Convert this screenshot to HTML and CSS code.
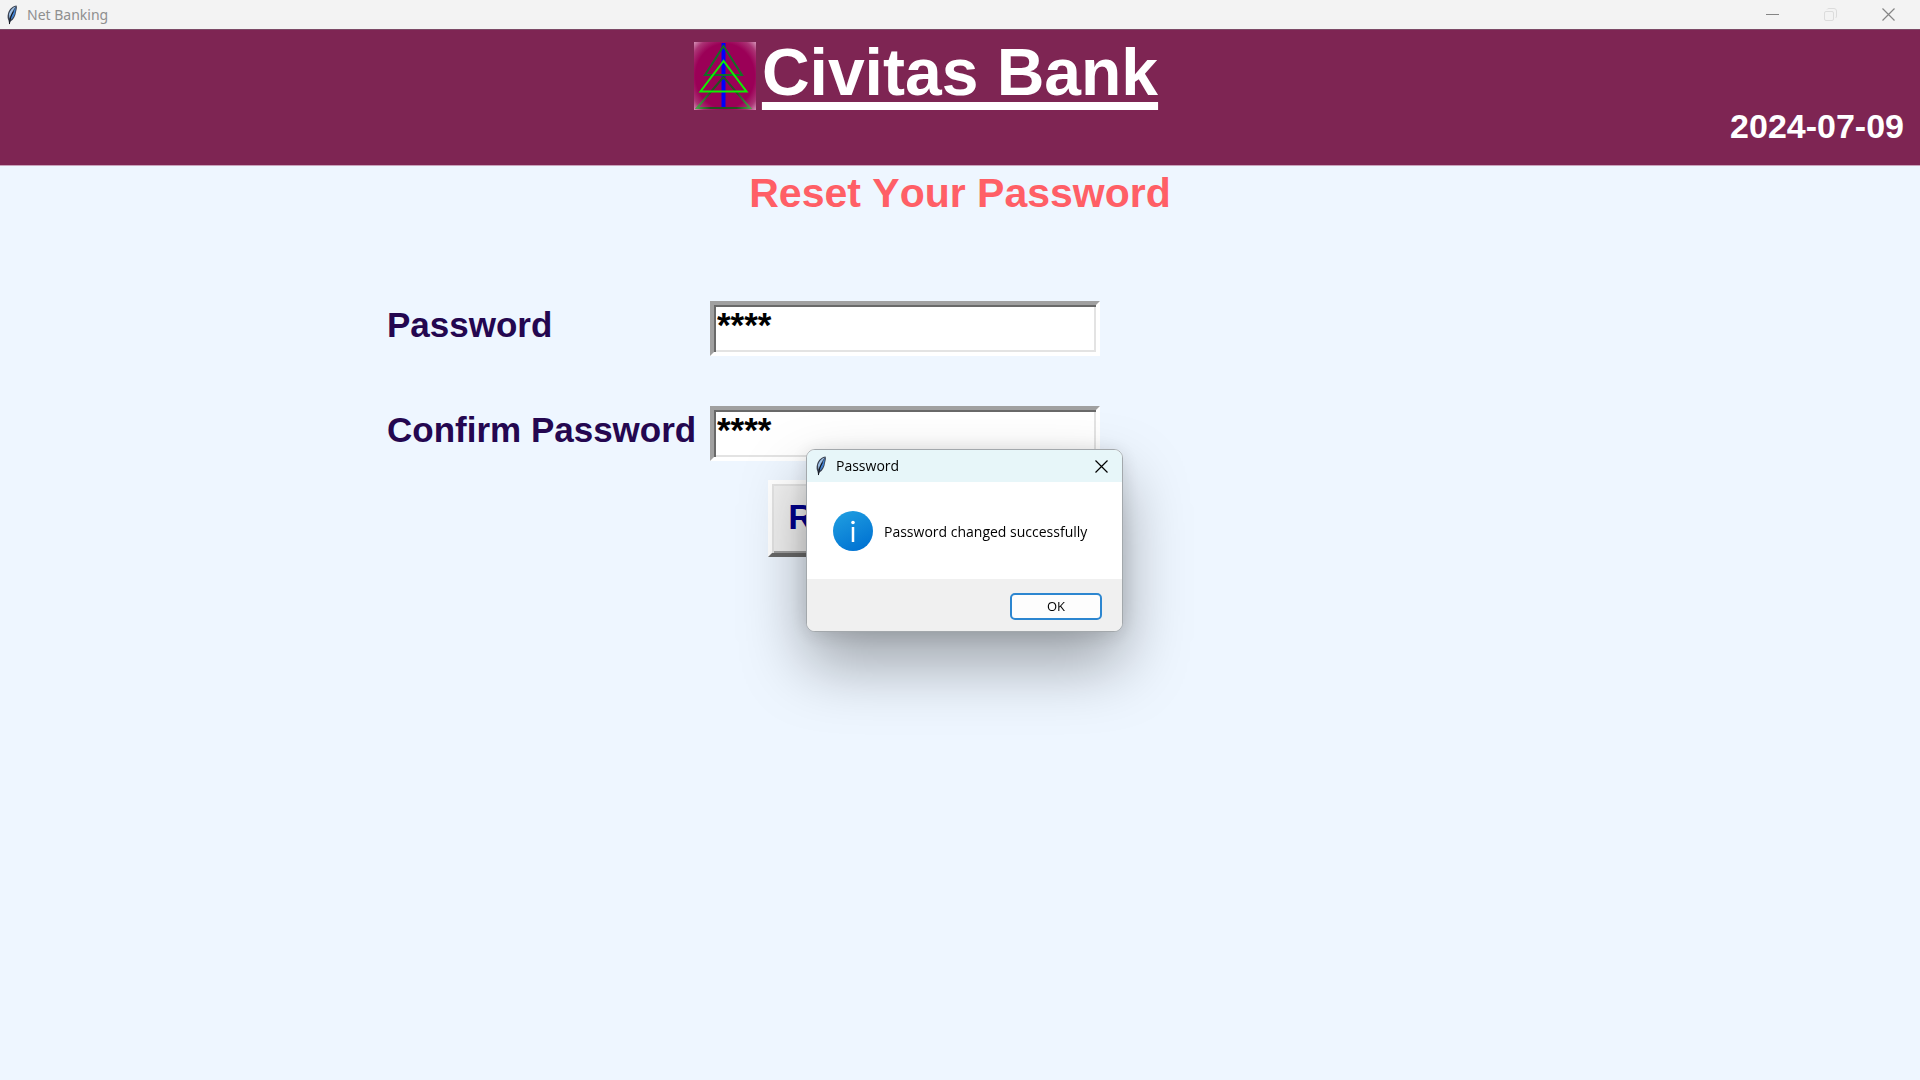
FILE: index.html
```html
<!DOCTYPE html>
<html lang="en">
<head>
<meta charset="utf-8">
<title>Net Banking</title>
<link rel="stylesheet" href="styles.css">
</head>
<body>
<svg class="defs" aria-hidden="true">
  <symbol id="feather" viewBox="0 0 12 20">
    <path d="M10.5.5C7 1 3 4 2 8.500C1.300 11.500 1.500 13.500 2.500 15.500L3.300 19.500L4.500 16.500C8 14.500 9.500 10.500 10 7C10.500 4.500 11.500 2.500 10.500.5Z" fill="#3a4252"/>
    <path d="M9.800 1.500C6.500 2.500 4 5.500 3 9L3.400 13.500C5 9 7 5 9.800 1.500Z" fill="#9dbfe4"/>
    <path d="M10 2C7.500 6 5.500 10 4.300 15C7.500 13 8.800 10 9.300 6.500Z" fill="#3f80d0"/>
    <path d="M7.500 6.500C5.500 10 4 13 3.400 19" fill="none" stroke="#11151c"/>
  </symbol>
  <symbol id="close" viewBox="0 0 13 13">
    <path d="M.5.5L12.500 12.500M12.500.5L.5 12.500" fill="none" stroke="currentColor" stroke-width="1.200"/>
  </symbol>
</svg>

<header class="titlebar">
  <svg class="feather"><use href="#feather"/></svg>
  <span class="titlebar-text">Net Banking</span>
  <div class="window-controls">
    <button type="button" aria-label="Minimize"><svg viewBox="0 0 13 13"><path d="M0 6.500H13" stroke="currentColor"/></svg></button>
    <button type="button" aria-label="Restore" disabled><svg viewBox="0 0 13 13"><rect x=".5" y="3.500" width="9" height="9" rx="1.500" fill="none" stroke="currentColor"/><path d="M3 1.500Q3.500.5 5 .5H10Q12.500.5 12.500 3V8Q12.500 9.500 11.500 10" fill="none" stroke="currentColor"/></svg></button>
    <button type="button" aria-label="Close"><svg><use href="#close"/></svg></button>
  </div>
</header>

<section class="banner">
  <div class="brand">
    <svg class="logo" viewBox="0 0 62 68" role="img" aria-label="Civitas Bank logo">
      <defs>
        <radialGradient id="glow" cx=".5" cy=".5" r=".72">
          <stop offset=".66" stop-color="#9b0057"/>
          <stop offset=".84" stop-color="#ab3475"/>
          <stop offset="1" stop-color="#dba0c0"/>
        </radialGradient>
        <linearGradient id="base" x1="0" x2="1">
          <stop offset="0" stop-color="#48a048"/>
          <stop offset=".25" stop-color="#245020"/>
          <stop offset=".75" stop-color="#245020"/>
          <stop offset="1" stop-color="#48a048"/>
        </linearGradient>
      </defs>
      <rect width="62" height="68" fill="url(#glow)"/>
      <path d="M29.500 1V66" stroke="#0000fa" stroke-width="4"/>
      <path d="M29.500 4L11 33H48Z" fill="none" stroke="#127025" stroke-width="2"/>
      <path d="M29.500 35L3 66H56Z" fill="none" stroke="url(#base)" stroke-width="2"/>
      <path d="M29.500 19L6.500 49.500H52.500Z" fill="none" stroke="#0ff000" stroke-width="2"/>
    </svg>
    <h1 class="bank-name">Civitas Bank</h1>
  </div>
  <time class="date" datetime="2024-07-09">2024-07-09</time>
</section>

<main>
  <h2 class="page-title">Reset Your Password</h2>
  <form class="reset-form">
    <label for="password">Password</label>
    <input id="password" type="text" value="****" autocomplete="off">
    <label for="confirm">Confirm Password</label>
    <input id="confirm" type="text" value="****" autocomplete="off">
    <button class="reset" type="submit">Reset</button>
  </form>
</main>

<div class="dialog" role="dialog" aria-labelledby="dialog-title">
  <div class="dialog-head">
    <svg class="feather"><use href="#feather"/></svg>
    <span id="dialog-title">Password</span>
    <button class="dialog-close" type="button" aria-label="Close"><svg><use href="#close"/></svg></button>
  </div>
  <div class="dialog-body">
    <svg class="info" viewBox="0 0 40 40" aria-hidden="true">
      <defs>
        <linearGradient id="info-fill" x1=".2" y1="0" x2=".7" y2="1">
          <stop offset="0" stop-color="#1f9de0"/>
          <stop offset="1" stop-color="#0072d2"/>
        </linearGradient>
      </defs>
      <circle cx="20" cy="20" r="20" fill="url(#info-fill)"/>
      <circle cx="20" cy="11.500" r="1.800" fill="#fff"/>
      <path d="M20 16V31" stroke="#fff" stroke-width="2.500"/>
    </svg>
    <p>Password changed successfully</p>
  </div>
  <div class="dialog-foot">
    <button class="ok" type="button">OK</button>
  </div>
</div>
</body>
</html>
```
FILE: styles.css
```css
* {
  box-sizing: border-box;
}

body {
  margin: 0;
  min-height: 100vh;
  background: #eef6ff;
  font-family: "Liberation Sans", Arial, sans-serif;
  font-weight: bold;
  font-kerning: none;
}

button {
  font-family: inherit;
}

.defs {
  position: absolute;
  width: 0;
  height: 0;
}

.titlebar {
  display: flex;
  align-items: center;
  height: 29px;
  padding: 0 3px 0 6px;
  background: #f3f3f3;
  color: #8f8f8f;
  font: 14px/20px "Noto Sans", sans-serif;
}

.feather {
  width: 12px;
  height: 20px;
}

.titlebar-text {
  margin-left: 9px;
}

.window-controls {
  display: flex;
  margin-left: auto;
}

.window-controls button {
  display: flex;
  align-items: center;
  justify-content: center;
  width: 58px;
  height: 28px;
  padding: 0;
  border: 0;
  background: none;
  color: #858585;
}

.window-controls button:disabled {
  color: #dcdcdc;
}

.window-controls svg,
.dialog-close svg {
  width: 13px;
  height: 13px;
}

.banner {
  display: flex;
  flex-direction: column;
  height: 137px;
  padding-top: 4px;
  border-top: 1px solid #7c4a66;
  border-bottom: 1px solid #c9a3bb;
  background: #7e2553;
  color: #fff;
}

.brand {
  display: flex;
  align-items: center;
  justify-content: center;
  gap: 6px;
  padding-right: 68px;
}

.logo {
  width: 62px;
  height: 68px;
  margin-top: 8px;
}

.bank-name {
  margin: 0;
  font-size: 66px;
  line-height: 72px;
  text-decoration: underline;
  text-decoration-thickness: 8px;
  text-underline-offset: 7px;
  text-decoration-skip-ink: none;
}

.date {
  align-self: flex-end;
  padding-right: 16px;
  font-size: 34px;
  line-height: 32px;
}

.page-title {
  margin: 0;
  padding-top: 3px;
  color: #ff5f66;
  font-size: 41px;
  line-height: 48px;
  text-align: center;
}

.reset-form {
  display: grid;
  grid-template-columns: 323px 390px;
  row-gap: 50px;
  margin: 84px 0 0 calc(50% - 573px);
  color: #240750;
  font-size: 35px;
}

.reset-form label {
  line-height: 48px;
}

.reset-form input {
  height: 55px;
  padding: 0 3px 8px;
  border: 4px solid;
  border-color: #a0a0a0 #fff #fff #a0a0a0;
  border-radius: 0;
  outline: 0;
  background: #fff;
  box-shadow: inset 2px 2px #696969, inset -2px -2px #e3e3e3;
  color: #000;
  font: inherit;
}

.reset {
  grid-column: 2;
  justify-self: start;
  width: 136px;
  height: 77px;
  margin: -31px 0 0 58px;
  padding: 0 0 4px;
  border: 4px solid;
  border-color: #fff #696969 #696969 #fff;
  background: #f0f0f0;
  box-shadow: inset 2px 2px #e3e3e3, inset -2px -2px #a0a0a0;
  color: #00008b;
  font: inherit;
}

.dialog {
  position: fixed;
  top: 50%;
  left: 50%;
  width: 317px;
  margin: -91px 0 0 -154px;
  overflow: hidden;
  border: 1px solid #a3a8ac;
  border-radius: 9px;
  background: #fff;
  box-shadow: 0 32px 64px rgba(0, 0, 0, .34), 0 2px 20px rgba(0, 0, 0, .12);
  color: #000;
  font: 14px/20px "Open Sans", sans-serif;
}

.dialog-head {
  display: flex;
  align-items: center;
  height: 32px;
  padding: 0 14px 0 8px;
  background: #e7f6f9;
}

.dialog-head span {
  margin-left: 9px;
}

.dialog-close {
  display: flex;
  margin-left: auto;
  padding: 0;
  border: 0;
  background: none;
}

.dialog-body {
  display: flex;
  align-items: center;
  gap: 11px;
  height: 97px;
  padding-left: 26px;
}

.dialog-body p {
  margin: 0;
  padding-top: 2px;
}

.info {
  width: 40px;
  height: 40px;
}

.dialog-foot {
  display: flex;
  align-items: center;
  justify-content: flex-end;
  height: 52px;
  padding: 2px 20px 0 0;
  background: #f0f0f0;
}

.ok {
  width: 92px;
  height: 27px;
  padding: 0;
  border: 2px solid #2c86d0;
  border-radius: 5px;
  background: #fdfdfd;
  color: #000;
  font-size: 13px;
}
```
